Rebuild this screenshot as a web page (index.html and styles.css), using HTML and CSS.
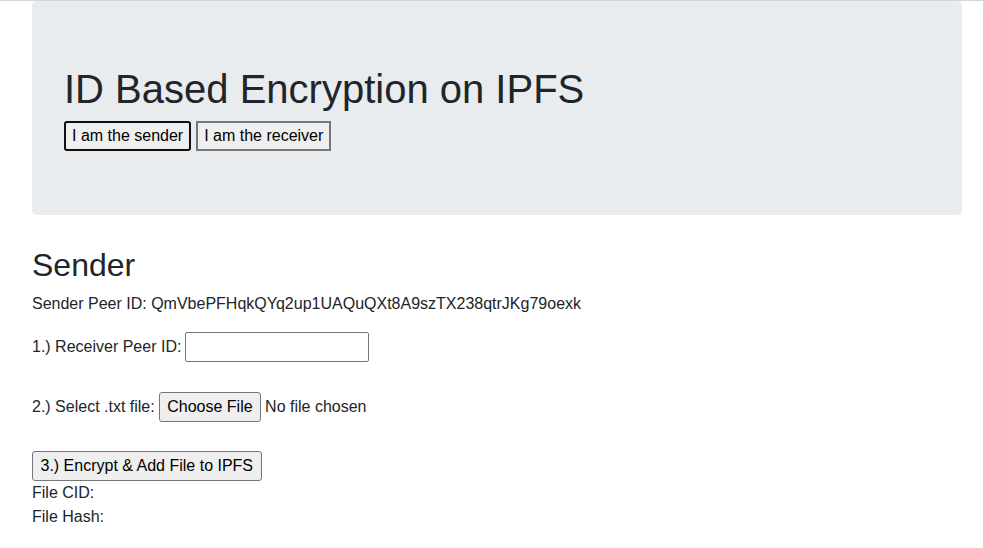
FILE: index.html
```html
<!DOCTYPE html>
<html lang="en">
<head>
<meta charset="utf-8">
<title>ID Based Encryption on IPFS</title>
<link rel="stylesheet" href="styles.css">
</head>
<body>
<div class="topline"></div>
<div class="container">
  <div class="jumbotron">
    <h1 class="title">ID Based Encryption on IPFS</h1>
    <div class="role-buttons">
      <button class="btn btn-role btn-focused">I am the sender</button>
      <button class="btn btn-role">I am the receiver</button>
    </div>
  </div>

  <h2 class="section-title">Sender</h2>
  <p class="peer-id">Sender Peer ID: QmVbePFHqkQYq2up1UAQuQXt8A9szTX238qtrJKg79oexk</p>

  <div class="row row-first">
    <span>1.) Receiver Peer ID:</span>
    <input class="text-input" type="text">
  </div>

  <div class="row row-second">
    <span>2.) Select .txt file:</span>
    <span class="btn btn-plain">Choose File</span>
    <span>No file chosen</span>
  </div>

  <div class="row row-third">
    <button class="btn btn-plain">3.) Encrypt &amp; Add File to IPFS</button>
  </div>
  <div class="line">File CID:</div>
  <div class="line">File Hash:</div>
</div>
</body>
</html>
```

FILE: styles.css
```css
* { box-sizing: border-box; }

html, body {
  margin: 0;
  padding: 0;
  background: #fff;
}

body {
  font-family: "Liberation Sans", Arial, sans-serif;
  font-size: 16px;
  line-height: 1.5;
  color: #212529;
}

.topline {
  height: 1px;
  background: #d3d6da;
}

.container {
  margin: 0 21px 0 32px;
}

.jumbotron {
  background: #e9ecef;
  border-radius: 5px;
  padding: 64px 32px;
  margin-bottom: 31px;
}

.title {
  margin: 0 0 8px;
  font-size: 40px;
  font-weight: 400;
  line-height: 1.2;
}

.role-buttons {
  display: flex;
  gap: 5px;
}

.btn {
  font-family: "Liberation Sans", Arial, sans-serif;
  font-size: 16px;
  color: #000;
  background: #efefef;
  height: 30px;
  padding: 0 7.5px;
  line-height: 28px;
  border: 1px solid #767676;
  border-radius: 3px;
  display: inline-block;
}

.btn-role {
  height: 30px;
  padding: 0 6px;
  line-height: 26px;
  border: 2px solid #767676;
  border-radius: 0;
}

.btn-focused {
  border-color: #101010;
  border-radius: 3px;
}

.section-title {
  margin: 0 0 8px;
  font-size: 32px;
  font-weight: 400;
  line-height: 1.2;
}

.peer-id {
  margin: 0 0 16px;
}

.row {
  display: flex;
  align-items: center;
  gap: 4px;
  height: 30px;
}

.row-second {
  margin-top: 30px;
}

.row-third {
  margin-top: 29px;
}

.text-input {
  width: 184px;
  height: 30px;
  border: 1px solid #767676;
  border-radius: 2px;
  background: #fff;
  font-family: "Liberation Sans", Arial, sans-serif;
  font-size: 16px;
  padding: 1px 2px;
}

.line {
  line-height: 24px;
}
```
